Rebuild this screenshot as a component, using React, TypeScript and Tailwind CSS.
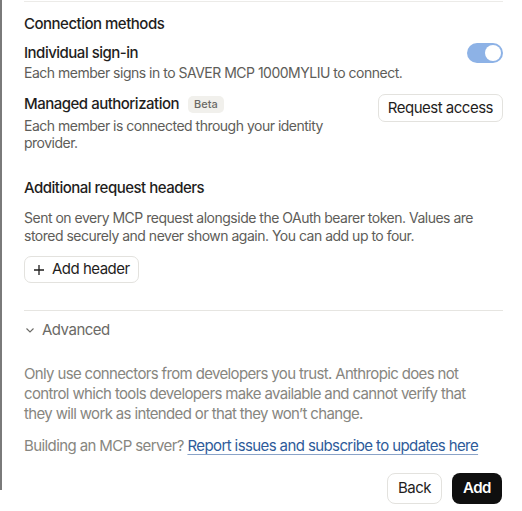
import React from "react";

export default function App() {
  return (
    <div className="w-[522px] h-[511px] bg-white overflow-hidden flex tracking-[-0.5px]" style={{ fontFamily: "Inter, 'Noto Sans', sans-serif" }}>
      <div className="w-[2px] h-[490px] bg-[#7a7a7a] shrink-0" />
      <div className="flex-1 pl-[22px] pr-[19px] flex flex-col text-[#1f1e1d]">
        <div className="h-px bg-[#ecebe8] mt-px" />
        <div className="mt-[12px] text-[15px] font-medium leading-[20px]">Connection methods</div>
        <div className="mt-[9px] flex items-center justify-between">
          <div className="text-[15px] font-medium leading-[20px]">Individual sign-in</div>
          <div className="w-[36px] h-[20px] rounded-full bg-[#8db2e6] flex items-center justify-end pr-[2px]">
            <div className="w-[16px] h-[16px] rounded-full bg-white" />
          </div>
        </div>
        <div className="text-[14px] leading-[20px] text-[#5e5d59]">Each member signs in to SAVER MCP 1000MYLIU to connect.</div>
        <div className="mt-[11px] flex justify-between items-start">
          <div className="flex flex-col">
            <div className="flex items-center gap-[9px]">
              <span className="text-[15px] font-medium leading-[20px]">Managed authorization</span>
              <span className="text-[11px] leading-[17px] px-[6px] rounded-[5px] bg-[#f1f0ec] text-[#6b6a66] font-medium tracking-normal">Beta</span>
            </div>
            <div className="text-[14px] leading-[17px] text-[#5e5d59] mt-[3px] w-[330px]">Each member is connected through your identity provider.</div>
          </div>
          <button className="h-[28px] px-[9px] rounded-[7px] border border-[#e3e2de] text-[15px] text-[#1f1e1d] bg-white">Request access</button>
        </div>
        <div className="mt-[27px] text-[15px] font-medium leading-[20px]">Additional request headers</div>
        <div className="mt-[11px] text-[14px] leading-[18px] text-[#5e5d59]">
          Sent on every MCP request alongside the OAuth bearer token. Values are stored securely and never shown again. You can add up to four.
        </div>
        <div className="mt-[11px]">
          <button className="h-[27px] px-[8px] rounded-[7px] border border-[#e3e2de] text-[15px] flex items-center gap-[7px] bg-white">
            <svg width="12" height="12" viewBox="0 0 12 12" fill="none" stroke="#1f1e1d" strokeWidth="1.3"><path d="M6 1v10M1 6h10" /></svg>
            Add header
          </button>
        </div>
        <div className="mt-[27px] h-px bg-[#e6e5e1]" />
        <div className="mt-[9px] flex items-center gap-[6px] text-[#6b6a66]">
          <svg width="12" height="12" viewBox="0 0 12 12" fill="none" stroke="#6b6a66" strokeWidth="1.1"><path d="M2.5 4.5 6 8l3.5-3.5" /></svg>
          <span className="text-[15px] leading-[20px]">Advanced</span>
        </div>
        <div className="mt-[24px] w-[452px] text-[15px] leading-[20px] text-[#87867f] tracking-[-0.65px]">
          Only use connectors from developers you trust. Anthropic does not control which tools developers make available and cannot verify that they will work as intended or that they won’t change.
        </div>
        <div className="mt-[12px] text-[15px] leading-[20px] text-[#87867f] tracking-[-0.6px]">
          Building an MCP server?{" "}
          <a className="text-[#2e5b9a] underline decoration-[#8aa3c8] underline-offset-[3px]">Report issues and subscribe to updates here</a>
        </div>
        <div className="mt-[17px] flex justify-end gap-[10px] pr-px">
          <button className="h-[31px] w-[55px] rounded-[8px] border border-[#e3e2de] text-[15px] bg-white">Back</button>
          <button className="h-[31px] w-[50px] rounded-[8px] bg-[#0f0f0f] text-white text-[15px] font-semibold">Add</button>
        </div>
      </div>
    </div>
  );
}
